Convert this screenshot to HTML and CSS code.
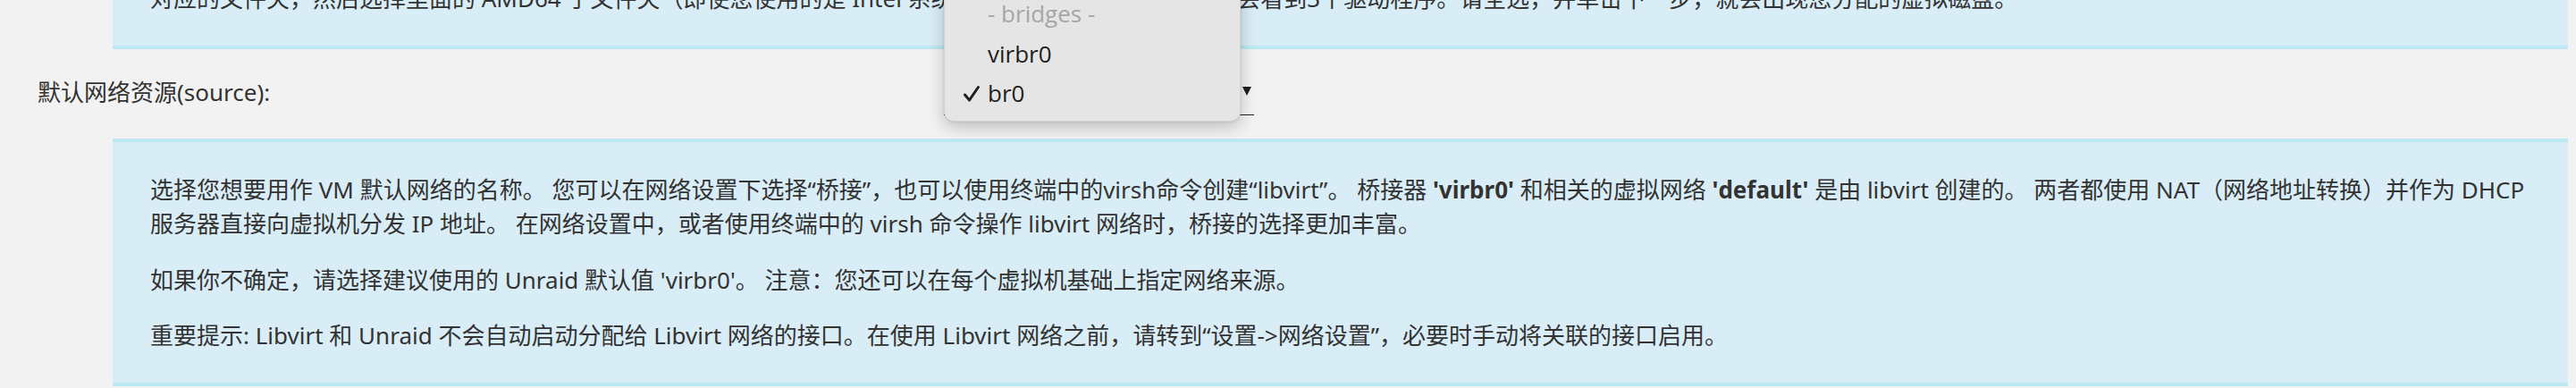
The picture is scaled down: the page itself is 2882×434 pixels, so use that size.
FILE: index.html
```html
<!DOCTYPE html>
<html lang="zh-CN">
<head>
<meta charset="utf-8">
<title>VM 设置</title>
<link rel="stylesheet" href="styles.css">
</head>
<body>
<div class="page">
  <div class="info info-top">
    <p>对应的文件夹，然后选择里面的 AMD64 子文件夹（即使您使用的是 Intel 系统，也选择 AMD64）。您应该会看到3个驱动程序。请全选，并单击下一步，就会出现您分配的虚拟磁盘。</p>
  </div>

  <div class="row">
    <label class="label">默认网络资源(source):</label>
    <div class="select-wrap">
      <div class="select">
        <span class="value">br0</span>
        <span class="arrow"></span>
      </div>
      <div class="menu">
        <div class="item disabled">- bridges -</div>
        <div class="item">virbr0</div>
        <div class="item checked">
          <svg class="check" viewBox="0 0 20 20" width="20" height="20"><polyline points="2.5,11 7.5,17 17.5,2.5" fill="none" stroke="#1e1e1e" stroke-width="3" stroke-linecap="round" stroke-linejoin="round"/></svg>
          br0
        </div>
      </div>
    </div>
  </div>

  <div class="info info-bottom">
    <p>选择您想要用作 VM 默认网络的名称。 您可以在网络设置下选择“桥接”，也可以使用终端中的virsh命令创建“libvirt”。 桥接器 <b>'virbr0'</b> 和相关的虚拟网络 <b>'default'</b> 是由 libvirt 创建的。 两者都使用 NAT（网络地址转换）并作为 DHCP 服务器直接向虚拟机分发 IP 地址。 在网络设置中，或者使用终端中的 virsh 命令操作 libvirt 网络时，桥接的选择更加丰富。</p>
    <p>如果你不确定，请选择建议使用的 Unraid 默认值 'virbr0'。 注意：您还可以在每个虚拟机基础上指定网络来源。</p>
    <p>重要提示: Libvirt 和 Unraid 不会自动启动分配给 Libvirt 网络的接口。在使用 Libvirt 网络之前，请转到“设置-&gt;网络设置”，必要时手动将关联的接口启用。</p>
  </div>
</div>
</body>
</html>
```

FILE: styles.css
```css
html, body {
  margin: 0;
  padding: 0;
}
body {
  background: #f2f2f2;
  color: #333333;
  font-family: "Noto Sans", "Noto Sans CJK SC", sans-serif;
  font-size: 26px;
  overflow: hidden;
}
.page {
  margin-top: -59px;
  margin-right: 9px;
}
.info {
  margin-left: 126px;
  background: #d9edf7;
  border-top: 4px solid #bce8f1;
  border-bottom: 4px solid #bce8f1;
  padding: 9.5px 42px;
}
.info p {
  margin: 24.5px 0;
  line-height: 38px;
}
.info b {
  font-weight: 700;
}
.row {
  display: grid;
  grid-template-columns: 1056px auto;
  align-items: center;
  height: 100px;
}
.label {
  padding-left: 42px;
  line-height: 38px;
  margin-top: -4px;
}
.select-wrap {
  position: relative;
  width: 347px;
}
.select {
  height: 48px;
  border-bottom: 1px solid #222222;
  display: flex;
  align-items: center;
  justify-content: space-between;
  padding: 0 3px 0 49px;
  box-sizing: border-box;
}
.arrow {
  width: 0;
  height: 0;
  border-left: 5px solid transparent;
  border-right: 5px solid transparent;
  border-top: 10px solid #1e1e1e;
  margin-bottom: 6px;
}
.menu {
  position: absolute;
  left: 0;
  top: -97px;
  width: 332px;
  box-sizing: border-box;
  padding: 8px 0;
  background: #e5e5e5;
  border: 1px solid rgba(0, 0, 0, 0.08);
  border-radius: 11px;
  box-shadow: 0 6px 18px rgba(0, 0, 0, 0.22), 0 0 2px rgba(0, 0, 0, 0.15);
  font-family: "Open Sans", "Noto Sans", sans-serif;
  font-size: 26px;
  color: #1e1e1e;
}
.item {
  position: relative;
  height: 44.5px;
  line-height: 44.5px;
  padding-left: 48px;
}
.item.disabled {
  color: #a6a6a6;
}
.check {
  position: absolute;
  left: 20px;
  top: 13px;
}
```
